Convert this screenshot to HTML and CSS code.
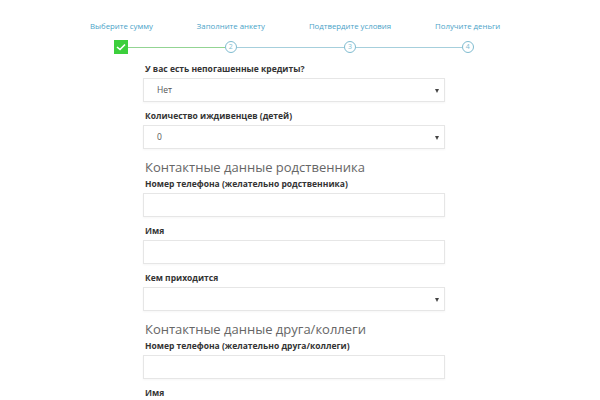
FILE: index.html
```html
<!doctype html>
<html>
  <head>
    <title>Анкета</title>
    <link rel="stylesheet" href="styles.css">
  </head>
  <body>
    <div class="steps">
      <div class="step done">
        <div class="step-title">Выберите сумму</div>
        <div class="step-track">
          <span class="line hidden"></span>
          <span class="check">
            <svg width="10" height="8" viewBox="0 0 10 8"><path d="M1 4 L4 6.5 L9 1.5" fill="none" stroke="#fff" stroke-width="1.6"/></svg>
          </span>
          <span class="line green"></span>
        </div>
      </div>
      <div class="step">
        <div class="step-title">Заполните анкету</div>
        <div class="step-track">
          <span class="line green"></span>
          <span class="num">2</span>
          <span class="line"></span>
        </div>
      </div>
      <div class="step">
        <div class="step-title">Подтвердите условия</div>
        <div class="step-track">
          <span class="line"></span>
          <span class="num">3</span>
          <span class="line"></span>
        </div>
      </div>
      <div class="step">
        <div class="step-title">Получите деньги</div>
        <div class="step-track">
          <span class="line"></span>
          <span class="num">4</span>
          <span class="line hidden"></span>
        </div>
      </div>
    </div>

    <div class="form">
      <div class="field">
        <div class="label">У вас есть непогашенные кредиты?</div>
        <div class="select">Нет</div>
      </div>
      <div class="field">
        <div class="label">Количество иждивенцев (детей)</div>
        <div class="select">0</div>
      </div>

      <h2 class="section-title">Контактные данные родственника</h2>
      <div class="field">
        <div class="label">Номер телефона (желательно родственника)</div>
        <div class="input"></div>
      </div>
      <div class="field">
        <div class="label">Имя</div>
        <div class="input"></div>
      </div>
      <div class="field">
        <div class="label">Кем приходится</div>
        <div class="select"></div>
      </div>

      <h2 class="section-title">Контактные данные друга/коллеги</h2>
      <div class="field">
        <div class="label">Номер телефона (желательно друга/коллеги)</div>
        <div class="input"></div>
      </div>
      <div class="field">
        <div class="label">Имя</div>
        <div class="input"></div>
      </div>
    </div>
  </body>
</html>
```

FILE: styles.css
```css
:root {
  --step-text: #4aa3c8;
  --step-line: #a6cfdc;
  --step-circle: #7fbcd0;
  --green: #3ccf3c;
  --green-line: #93d493;
  --label: #333333;
  --heading: #666666;
  --border: #e6e6e6;
}

body {
  font-family: 'Open Sans', 'Noto Sans', sans-serif;
  margin: 0;
  background: #ffffff;
  color: var(--label);
  overflow: hidden;
}

.steps {
  display: flex;
  margin-left: 68px;
  padding-top: 20px;
}

.step {
  display: flex;
  flex-direction: column;
}

.step-title {
  font-size: 7.8px;
  line-height: 12px;
  color: var(--step-text);
  padding: 0 22px;
  white-space: nowrap;
}

.step-track {
  display: flex;
  align-items: center;
  margin-top: 8px;
  height: 14px;
}

.line {
  flex: 1;
  height: 1px;
  background: var(--step-line);
}

.line.green {
  background: var(--green-line);
}

.line.hidden {
  visibility: hidden;
}

.check {
  width: 14px;
  height: 14px;
  background: var(--green);
  display: flex;
  align-items: center;
  justify-content: center;
}

.num {
  width: 10px;
  height: 10px;
  border: 1px solid var(--step-circle);
  border-radius: 50%;
  font-size: 7px;
  line-height: 10px;
  text-align: center;
  color: var(--step-circle);
}

.form {
  width: 302px;
  margin-left: 143px;
  margin-top: 9px;
}

.field {
  margin-bottom: 8px;
}

.label {
  font-size: 8.5px;
  font-weight: 700;
  line-height: 11px;
  padding-left: 2px;
  margin-bottom: 4px;
}

.select,
.input {
  height: 22px;
  border: 1px solid var(--border);
  box-shadow: 0 1px 2px rgba(0, 0, 0, 0.04);
  box-sizing: content-box;
  font-size: 8.5px;
  line-height: 22px;
  color: #555555;
  padding-left: 13px;
  position: relative;
}

.select::after {
  content: '';
  position: absolute;
  right: 5px;
  top: 10px;
  border-left: 2.5px solid transparent;
  border-right: 2.5px solid transparent;
  border-top: 4px solid #444444;
}

.section-title {
  font-size: 13px;
  font-weight: 400;
  color: var(--heading);
  margin: 0 0 1px 2px;
  line-height: 20px;
}
```
